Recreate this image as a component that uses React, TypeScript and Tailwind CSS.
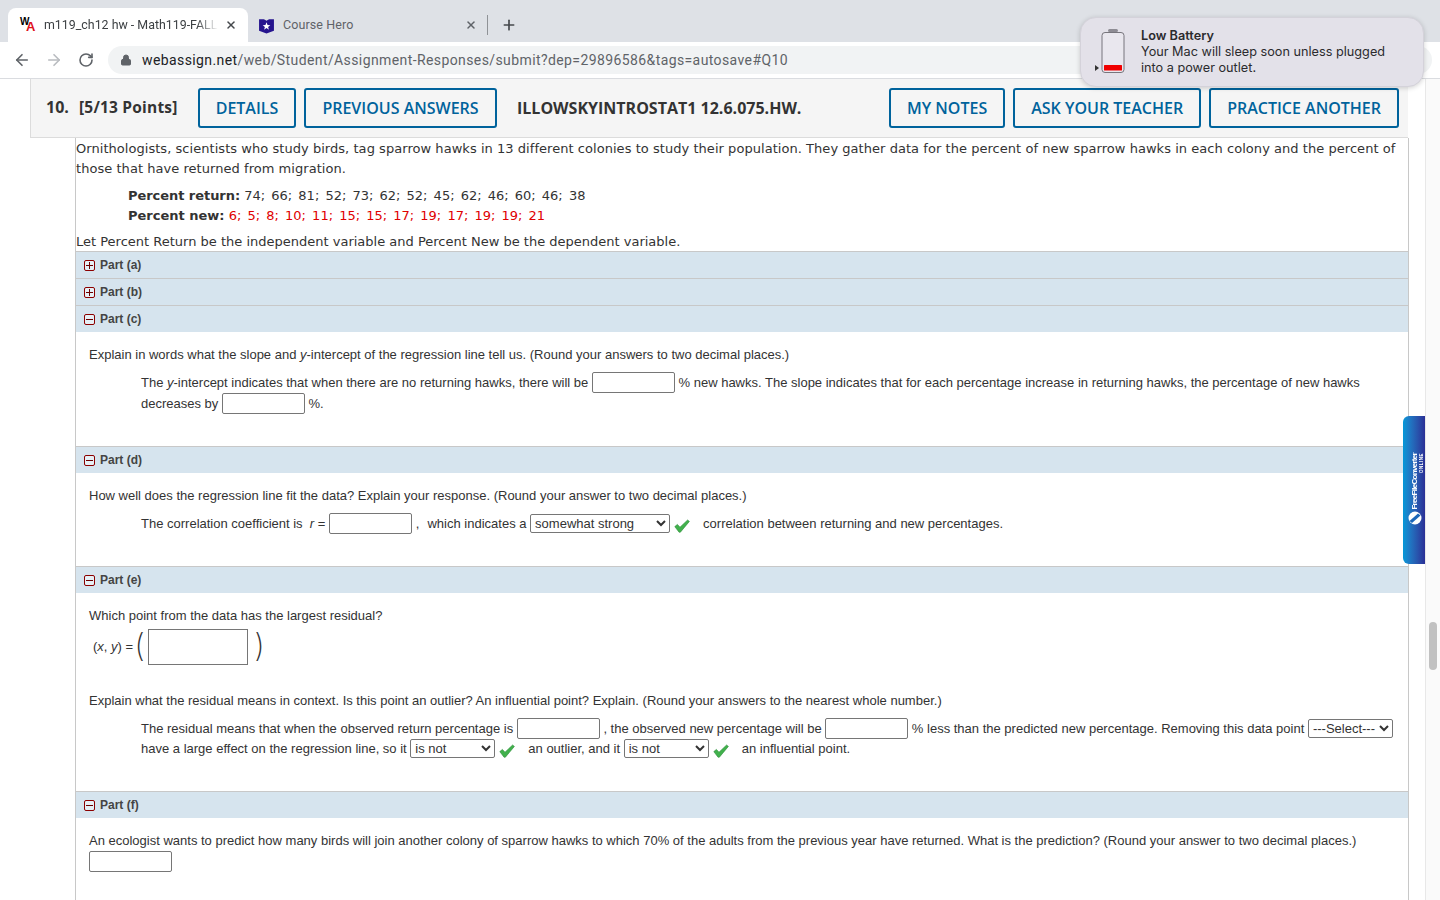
import { ArrowLeft, ArrowRight, Lock, Plus, RotateCw, X } from "lucide-react";
import type { ReactNode } from "react";

function Blank({ w = "w-[83px]" }: { w?: string }) {
  return <input type="text" className={`${w} h-[21px] -mt-[2px] align-middle bg-white border border-[#767676] rounded-[2px]`} />;
}

function Pick({ value, w }: { value: string; w: string }) {
  return (
    <select
      defaultValue={value}
      className={`${w} h-[19px] -mt-[2px] align-middle bg-white border border-[#767676] rounded-[2px] text-[13px] text-[#333] font-['Liberation_Sans',sans-serif]`}
    >
      <option>{value}</option>
    </select>
  );
}

function Check() {
  return (
    <svg viewBox="0 0 16 14" className="inline-block w-[16px] h-[14px] align-middle ml-[4px] mt-[3px]">
      <path d="M0.8 7.6 L3.4 5.4 L6 8.2 L13.6 1 L15.4 2.4 L6.4 13.2 L5 13.2 Z" fill="#41b14c" stroke="#2f8f3d" strokeWidth="0.6" strokeLinejoin="round" />
    </svg>
  );
}

function PartBar({ label, open }: { label: string; open?: boolean }) {
  return (
    <div className="h-[27px] border-t border-[#c8c8c8] bg-[#d6e4ee] flex items-center pl-[8px] gap-[5px]">
      <span className="w-[11px] h-[11px] border border-[#8b0000] rounded-[2px] bg-white/40 flex items-center justify-center relative">
        <span className="w-[7px] h-px bg-[#6b0000]" />
        {!open && <span className="absolute w-px h-[7px] bg-[#6b0000]" />}
      </span>
      <span className="text-[12px] font-bold text-[#444]">{label}</span>
    </div>
  );
}

function HeadButton({ children, w }: { children: ReactNode; w?: string }) {
  return (
    <button className={`${w ?? "px-[16px]"} h-[40px] border-2 border-[#00639c] rounded-[3px] text-[16px] font-semibold text-[#00639c] whitespace-nowrap`}>
      {children}
    </button>
  );
}

function BrowserChrome() {
  return (
    <>
      <div className="h-[42px] bg-[#dee1e6] flex items-end pl-[8px] font-['Roboto',sans-serif] shrink-0">
        <div className="w-[240px] h-[34px] bg-white rounded-t-[8px] flex items-center pl-[12px]">
          <span className="w-[16px] h-[16px] relative shrink-0 font-['Liberation_Sans',sans-serif] font-bold leading-none">
            <span className="absolute left-0 top-0 text-[10px] text-black">W</span>
            <span className="absolute left-[6px] top-[3px] text-[13px] text-[#e0101a]">A</span>
          </span>
          <span className="ml-[8px] text-[12.4px] text-[#3c4043] w-[174px] whitespace-nowrap [mask-image:linear-gradient(to_right,black_88%,transparent)]">m119_ch12 hw - Math119-FALL</span>
          <X className="w-[12px] h-[12px] ml-[7px] text-[#45484c] shrink-0" strokeWidth={3} />
        </div>
        <div className="w-[240px] h-[34px] flex items-center pl-[10px] pr-[11px] relative">
          <svg viewBox="0 0 16 16" className="w-[17px] h-[17px] shrink-0">
            <path d="M1 2 L5.5 2 Q7 2.8 8 3.5 Q9 2.8 10.5 2 L15 2 L15 13 L8 15.5 L1 13 Z" fill="#26148e" />
            <path d="M8 5 L9 7.6 L11.6 7.7 L9.5 9.3 L10.3 12 L8 10.4 L5.7 12 L6.5 9.3 L4.4 7.7 L7 7.6 Z" fill="#fff" />
          </svg>
          <span className="ml-[8px] text-[12.5px] tracking-[0.1px] text-[#5f6368] flex-1">Course Hero</span>
          <X className="w-[12px] h-[12px] text-[#5f6368]" strokeWidth={3} />
          <span className="absolute right-0 top-[7px] w-px h-[20px] bg-[#8f9296]" />
        </div>
        <div className="h-[34px] flex items-center ml-[13px]">
          <Plus className="w-[16px] h-[16px] text-[#45484c]" strokeWidth={2.5} />
        </div>
      </div>
      <div className="h-[37px] bg-white border-b border-[#dadce0] flex items-center shrink-0 font-['Roboto',sans-serif]">
        <ArrowLeft className="ml-[13px] w-[18px] h-[18px] text-[#5f6368]" strokeWidth={2.2} />
        <ArrowRight className="ml-[14px] w-[18px] h-[18px] text-[#b9bcc0]" strokeWidth={2.2} />
        <RotateCw className="ml-[15px] w-[16px] h-[16px] text-[#5f6368]" strokeWidth={2.4} />
        <div className="ml-[14px] flex-1 mr-[8px] h-[28px] rounded-full bg-[#f1f3f4] flex items-center pl-[12px]">
          <Lock className="w-[12px] h-[12px] text-[#5f6368]" fill="#5f6368" strokeWidth={2} />
          <span className="ml-[10px] text-[14px] tracking-[0.4px] text-[#5f6368]">
            <span className="text-[#202124]">webassign.net</span>/web/Student/Assignment-Responses/submit?dep=29896586&amp;tags=autosave#Q10
          </span>
        </div>
      </div>
    </>
  );
}

function LowBattery() {
  return (
    <div className="absolute left-[1080px] top-[17px] w-[344px] h-[70px] rounded-[16px] bg-[#e3e1e9] border border-[#d4d2da] shadow-[0_1px_5px_rgba(0,0,0,0.18)] flex font-['Inter',sans-serif] text-[12.7px] leading-[16px] text-[#2b2b2e]">
      <svg viewBox="0 0 36 50" className="w-[36px] h-[50px] ml-[11px] mt-[10px] shrink-0">
        <rect x="16" y="1" width="10" height="3" rx="1.5" fill="#8e8c94" />
        <rect x="10" y="4.5" width="22" height="40" rx="3" fill="#e9e7ee" stroke="#77757c" strokeWidth="1" />
        <rect x="12" y="37" width="18" height="5.5" rx="0.5" fill="#f00000" />
        <path d="M3 37 L7 40 L3 43 Z" fill="#333" />
      </svg>
      <div className="ml-[13px] pt-[10px]">
        <div className="font-semibold">Low Battery</div>
        <div>Your Mac will sleep soon unless plugged</div>
        <div>into a power outlet.</div>
      </div>
    </div>
  );
}

function SideTab() {
  return (
    <div className="absolute left-[1403px] top-[416px] w-[22px] h-[148px] rounded-l-[6px] bg-gradient-to-r from-[#0098d8] to-[#2a2f96]">
      <span className="absolute left-[8px] bottom-[54px] [writing-mode:vertical-rl] rotate-180 text-white font-bold text-[8px] leading-[8px] font-['Liberation_Sans',sans-serif] tracking-[-0.7px] whitespace-nowrap">
        FreeFileConverter
      </span>
      <span className="absolute left-[16px] top-[37px] [writing-mode:vertical-rl] rotate-180 text-white font-bold text-[4.5px] leading-[5px] tracking-[0.5px] font-['Liberation_Sans',sans-serif]">
        ONLINE
      </span>
      <svg viewBox="0 0 14 14" className="absolute left-[5px] top-[95px] w-[14px] h-[14px]">
        <circle cx="7" cy="7" r="6.5" fill="#fff" />
        <path d="M1.5 10 L10 2.5 L12.5 4.5 L4 12 Z" fill="#1b66b8" />
      </svg>
    </div>
  );
}

export default function App() {
  return (
    <div className="relative w-[1440px] h-[900px] overflow-hidden bg-white flex flex-col">
      <BrowserChrome />
      <div className="flex-1 flex min-h-0">
        <div className="w-[1425px] overflow-hidden">
          <div className="ml-[30px] w-[1378px] h-[59px] bg-[#f5f5f5] border-l border-b border-[#dcdcdc] flex items-center pl-[15px] pr-[9px] font-['Open_Sans',sans-serif] text-[#333]">
            <span className="text-[16px] font-bold w-[33px] -mt-[2px]">10.</span>
            <span className="text-[15.5px] font-bold w-[119px] tracking-[0.2px]">[5/13 Points]</span>
            <div className="flex gap-[8px]">
              <HeadButton w="w-[98px]">DETAILS</HeadButton>
              <HeadButton w="w-[193px]">PREVIOUS ANSWERS</HeadButton>
            </div>
            <span className="ml-[20px] text-[16px] font-bold">ILLOWSKYINTROSTAT1 12.6.075.HW.</span>
            <div className="flex gap-[8px] ml-auto">
              <HeadButton>MY NOTES</HeadButton>
              <HeadButton>ASK YOUR TEACHER</HeadButton>
              <HeadButton>PRACTICE ANOTHER</HeadButton>
            </div>
          </div>

          <div className="ml-[75px] w-[1334px] border-x border-[#c8c8c8] h-[800px] font-['Liberation_Sans',sans-serif] text-[13px] text-[#333]">
            <div className="font-['DejaVu_Sans',sans-serif] h-[113px] text-[13px] text-[#333]">
              <p className="leading-[20px] pt-[1px] tracking-[0.045px]">
                Ornithologists, scientists who study birds, tag sparrow hawks in 13 different colonies to study their population. They gather data for the percent of new sparrow hawks in each colony and the percent of those that have returned from migration.
              </p>
              <div className="pl-[52px] mt-[7px] leading-[20px]">
                <div><b className="tracking-[-0.05px]">Percent return:</b> <span className="[word-spacing:2px]">74; 66; 81; 52; 73; 62; 52; 45; 62; 46; 60; 46; 38</span></div>
                <div><b>Percent new:</b> <span className="text-[#e00000] [word-spacing:2px]">6; 5; 8; 10; 11; 15; 15; 17; 19; 17; 19; 19; 21</span></div>
              </div>
              <p className="leading-[20px] mt-[6px]">Let Percent Return be the independent variable and Percent New be the dependent variable.</p>
            </div>

            <PartBar label="Part (a)" />
            <PartBar label="Part (b)" />
            <PartBar label="Part (c)" open />
            <div className="h-[114px] pl-[13px] pr-[40px] pt-[13px]">
              <p className="leading-[20px]">Explain in words what the slope and <i>y</i>-intercept of the regression line tell us. (Round your answers to two decimal places.)</p>
              <p className="pl-[52px] mt-[7px] leading-[21px] -mr-[10px]">
                The <i>y</i>-intercept indicates that when there are no returning hawks, there will be <Blank /> % new hawks. The slope indicates that for each percentage increase in returning hawks, the percentage of new hawks decreases by <Blank /> %.
              </p>
            </div>

            <PartBar label="Part (d)" open />
            <div className="h-[93px] pl-[13px] pt-[13px]">
              <p className="leading-[20px]">How well does the regression line fit the data? Explain your response. (Round your answer to two decimal places.)</p>
              <p className="pl-[52px] mt-[7px] leading-[21px]">
                The correlation coefficient is &nbsp;<i>r</i> = <Blank /> , &nbsp;<span className="ml-px">which indicates a</span> <Pick value="somewhat strong" w="w-[140px]" /><Check /><span className="ml-[13px]">correlation between returning and new percentages.</span>
              </p>
            </div>

            <PartBar label="Part (e)" open />
            <div className="h-[198px] pl-[13px] pt-[13px]">
              <p className="leading-[20px]">Which point from the data has the largest residual?</p>
              <div className="flex items-center h-[36px] mt-[3px] pl-[4px]">
                <span>(<i>x</i>, <i>y</i>) =</span>
                <span className="font-['Inter',sans-serif] text-[32px] font-extralight leading-none text-[#333] ml-[1px] w-[14px] -mt-[3px]">(</span>
                <input type="text" className="w-[100px] h-[36px] bg-white border border-[#767676]" />
                <span className="font-['Inter',sans-serif] text-[32px] font-extralight leading-none text-[#333] ml-[6px] -mt-[3px]">)</span>
              </div>
              <p className="leading-[20px] mt-[26px]">Explain what the residual means in context. Is this point an outlier? An influential point? Explain. (Round your answers to the nearest whole number.)</p>
              <p className="pl-[52px] mt-[8px] leading-[20px]">
                The residual means that when the observed return percentage is <Blank /> , the observed new percentage will be <Blank /> % less than the predicted new percentage. Removing this data point <Pick value="---Select---" w="w-[85px]" />
                <br />
                have a large effect on the regression line, so it <Pick value="is not" w="w-[85px]" /><Check /><span className="ml-[13px]">an outlier, and it</span> <Pick value="is not" w="w-[85px]" /><Check /><span className="ml-[13px]">an influential point.</span>
              </p>
            </div>

            <PartBar label="Part (f)" open />
            <div className="pl-[13px] pt-[13px]">
              <p className="leading-[20px]">An ecologist wants to predict how many birds will join another colony of sparrow hawks to which 70% of the adults from the previous year have returned. What is the prediction? (Round your answer to two decimal places.)</p>
              <div className="leading-[21px]"><Blank /></div>
            </div>
          </div>
        </div>
        <div className="w-[15px] bg-[#fafafa] border-l border-[#e8e8e8] flex justify-center">
          <div className="w-[8px] h-[48px] mt-[543px] rounded-full bg-[#c1c1c1]" />
        </div>
      </div>
      <LowBattery />
      <SideTab />
    </div>
  );
}
